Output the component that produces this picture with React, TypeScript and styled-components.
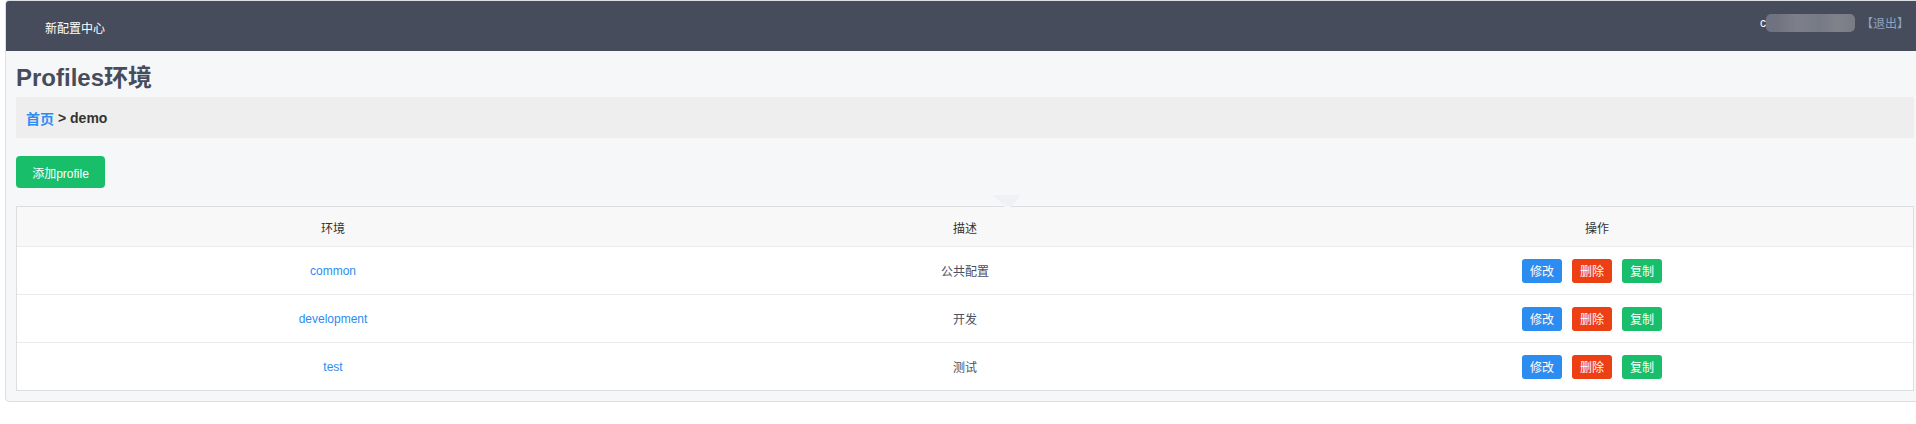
import React from "react";
import styled, { createGlobalStyle } from "styled-components";

const GlobalStyle = createGlobalStyle`
  html, body {
    margin: 0;
    padding: 0;
    background: #ffffff;
    overflow: hidden;
    font-family: "Liberation Sans", "Noto Sans CJK SC", sans-serif;
    color: #495060;
  }
`;

const Page = styled.div`
  padding-left: 5px;
  width: 1940px;
`;

const Frame = styled.div`
  width: 1918px;
  border: 1px solid #dcdee2;
  border-radius: 4px;
  background: #f5f7f9;
  overflow: hidden;
`;

const TopBar = styled.header`
  height: 50px;
  margin-left: -1px;
  background: #464c5b;
  display: flex;
  align-items: center;
  justify-content: space-between;
  padding: 0 15px 0 40px;
  font-size: 12px;
`;

const Brand = styled.div`
  color: #ffffff;
  font-size: 12px;
  padding-top: 2px;
`;

const UserBox = styled.div`
  display: flex;
  align-items: center;
  padding-bottom: 7px;
  font-size: 12px;
`;

const UserInitial = styled.span`
  color: #ffffff;
`;

const Masked = styled.span`
  display: inline-block;
  width: 89px;
  height: 18px;
  margin: 0 6px 0 0;
  background: linear-gradient(
    90deg,
    #6e7281 0%,
    #6e7281 10%,
    #70737f 11%,
    #7d808a 35%,
    #767a86 60%,
    #80828b 80%,
    #787b85 100%
  );
  border-radius: 5px;
  filter: blur(0.7px);
`;

const Logout = styled.a`
  color: #8fa3bf;
  text-decoration: none;
`;

const Content = styled.main`
  padding: 9px 10px 10px 10px;
`;

const Title = styled.h1`
  margin: 0 0 1px 0;
  font-size: 24px;
  line-height: 36px;
  font-weight: bold;
  color: #464c5b;
`;

const Crumbs = styled.div`
  height: 41px;
  background: #eeeeee;
  display: flex;
  align-items: center;
  padding: 0 10px;
  font-size: 14px;
  font-weight: bold;
  color: #333333;
`;

const CrumbLink = styled.a`
  color: #2d8cf0;
  text-decoration: none;
  margin-right: 4px;
`;

const Toolbar = styled.div`
  margin: 18px 0 18px 0;
  display: flex;
`;

const AddButton = styled.button`
  width: 89px;
  height: 32px;
  border: none;
  border-radius: 4px;
  background: #19be6b;
  color: #ffffff;
  font-family: inherit;
  font-size: 12px;
  padding: 0;
  cursor: pointer;
`;

const TableBox = styled.div`
  position: relative;
  border: 1px solid #dddee1;
  background: #ffffff;
`;

const Notch = styled.svg`
  position: absolute;
  top: -12px;
  left: 960px;
  pointer-events: none;
`;

const Row = styled.div<{ $head?: boolean; $last?: boolean }>`
  display: grid;
  grid-template-columns: 1fr 1fr 1fr;
  height: ${(p) => (p.$head ? 39 : 47)}px;
  background: ${(p) => (p.$head ? "#f8f8f9" : "#ffffff")};
  border-bottom: ${(p) => (p.$last ? "none" : "1px solid #e9eaec")};
`;

const Cell = styled.div<{ $head?: boolean }>`
  display: flex;
  align-items: center;
  justify-content: center;
  font-size: 12px;
  color: ${(p) => (p.$head ? "#333333" : "#495060")};
  padding-top: ${(p) => (p.$head ? 1 : 0)}px;
`;

const NameLink = styled.a`
  color: #2d8cf0;
  text-decoration: none;
`;

const Actions = styled.div`
  display: flex;
  align-items: center;
  justify-content: center;
`;

const ActionButton = styled.button<{ $tone: "primary" | "danger" | "success" }>`
  width: 40px;
  height: 24px;
  margin-right: 10px;
  border: none;
  border-radius: 3px;
  padding: 0;
  font-family: inherit;
  font-size: 12px;
  color: #ffffff;
  cursor: pointer;
  background: ${(p) =>
    p.$tone === "primary" ? "#2d8cf0" : p.$tone === "danger" ? "#ed3f14" : "#19be6b"};
`;

const profiles = [
  { name: "common", desc: "公共配置" },
  { name: "development", desc: "开发" },
  { name: "test", desc: "测试" },
];

export default function App() {
  return (
    <Page>
      <GlobalStyle />
      <Frame>
        <TopBar>
          <Brand>新配置中心</Brand>
          <UserBox>
            <UserInitial>c</UserInitial>
            <Masked />
            <Logout>【退出】</Logout>
          </UserBox>
        </TopBar>
        <Content>
          <Title>Profiles环境</Title>
          <Crumbs>
            <CrumbLink>首页</CrumbLink>
            <span>&gt; demo</span>
          </Crumbs>
          <Toolbar>
            <AddButton>添加profile</AddButton>
          </Toolbar>
          <TableBox>
            <Notch width="50" height="14" viewBox="0 0 50 14">
              <path d="M16 1 Q16 0 18 0 H42 Q44 0 43 1 L35 11 H29 Z" fill="#f0f1f4" />
              <rect x="27" y="11" width="7" height="2" fill="#f5f7f9" />
            </Notch>
            <Row $head>
              <Cell $head>环境</Cell>
              <Cell $head>描述</Cell>
              <Cell $head>操作</Cell>
            </Row>
            {profiles.map((p, i) => (
              <Row key={p.name} $last={i === profiles.length - 1}>
                <Cell>
                  <NameLink>{p.name}</NameLink>
                </Cell>
                <Cell>{p.desc}</Cell>
                <Actions>
                  <ActionButton $tone="primary">修改</ActionButton>
                  <ActionButton $tone="danger">删除</ActionButton>
                  <ActionButton $tone="success">复制</ActionButton>
                </Actions>
              </Row>
            ))}
          </TableBox>
        </Content>
      </Frame>
    </Page>
  );
}
